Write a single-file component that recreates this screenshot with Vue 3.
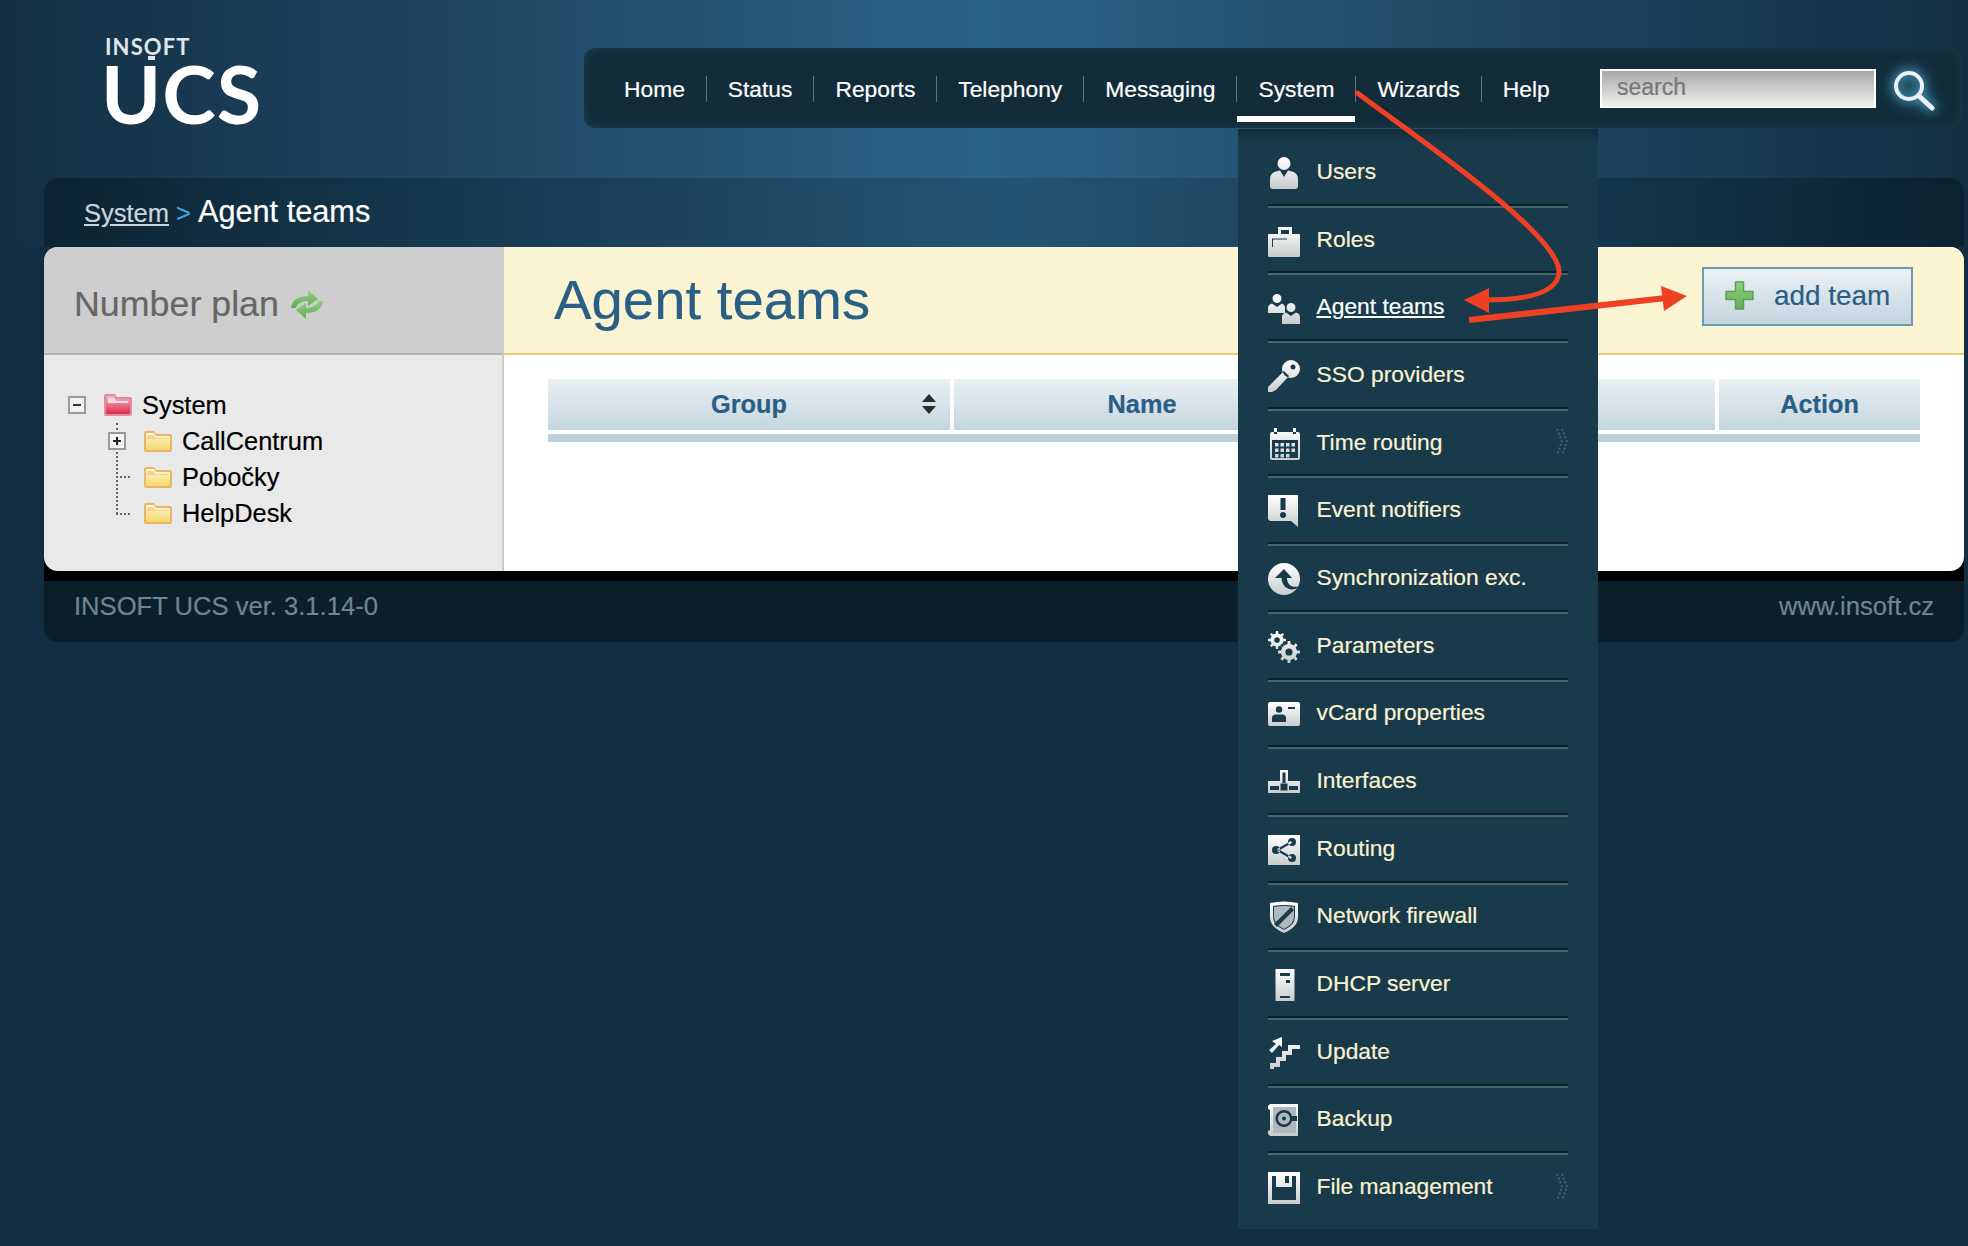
<script setup>
const circ = (x, y, r) => `M${x - r} ${y}a${r} ${r} 0 1 0 ${2 * r} 0a${r} ${r} 0 1 0 ${-2 * r} 0Z`
const rect = (x, y, w, h) => `M${x} ${y}h${w}v${h}h${-w}Z`
const gear = (cx, cy, R, r, hole, n) => {
  let d = ''
  const step = (Math.PI * 2) / n
  for (let i = 0; i < n; i++) {
    const a = i * step
    const pts = [[r, a - step * 0.5], [r, a - step * 0.24], [R, a - step * 0.16], [R, a + step * 0.16], [r, a + step * 0.24]]
    for (const [rad, t] of pts) {
      d += `${d ? 'L' : 'M'}${(cx + rad * Math.cos(t)).toFixed(2)} ${(cy + rad * Math.sin(t)).toFixed(2)}`
    }
  }
  return d + 'Z' + circ(cx, cy, hole)
}

const navItems = ['Home', 'Status', 'Reports', 'Telephony', 'Messaging', 'System', 'Wizards', 'Help']

let calendarDots = ''
for (const y of [15, 20.5, 26]) {
  for (const x of [7, 12.5, 18, 23.5]) {
    if (!(y === 26 && x === 23.5)) calendarDots += rect(x, y, 3.5, 3.5)
  }
}

const menu = [
  { label: 'Users', main: circ(16, 6.5, 6.5) + 'M8 14.5L12 13.5L16 20L20 13.5L24 14.5C28 15.5 30 18 30 22V29Q30 32 27 32H5Q2 32 2 29V22C2 18 4 15.5 8 14.5Z' },
  { label: 'Roles', main: 'M1 9H10V2H24V9H31Q32 9 32 10V31Q32 32 31 32H1Q0 32 0 31V10Q0 9 1 9ZM13 5V9H21V5Z', dark: 'M4 13.5H19V14.5H5V22H4Z' },
  { label: 'Agent teams', active: true, main: circ(9, 6.5, 4.5) + 'M4 11.5L9 15L14 11.5Q17 12.5 17 16V21H0V16Q0 12.5 4 11.5Z' + circ(23, 15.5, 4.5) + 'M18 20.5L23 24L28 20.5Q32 21.5 32 25V32H14V25Q14 21.5 18 20.5Z' },
  { label: 'SSO providers', main: circ(23, 9, 9) + circ(25, 7, 2.5) + 'M16 11L21 16L8 30L4 32H0V27Z' },
  { label: 'Time routing', arrow: true, main: 'M4 4H30Q32 4 32 6V30Q32 32 30 32H4Q2 32 2 30V6Q2 4 4 4ZM4 12V30H30V12Z' + rect(6, 0, 3, 6) + rect(25, 0, 3, 6) + calendarDots },
  { label: 'Event notifiers', main: 'M0 0H30V32L23 26H2L0 24Z', dark: rect(12.5, 3, 5, 12) + circ(15, 20, 3) },
  { label: 'Synchronization exc.', main: circ(16, 16, 16), dark: 'M7 15L16 6L24 15H19C19 21 23 25 31 23.5C26 29 14 27 13.500 15Z' },
  { label: 'Parameters', main: gear(9, 9, 9, 6.5, 2.8, 8) + gear(21, 21, 11, 8, 3.6, 8) },
  { label: 'vCard properties', main: 'M2 4H30Q32 4 32 6V26Q32 28 30 28H2Q0 28 0 26V6Q0 4 2 4Z', dark: circ(11, 11.5, 3.2) + 'M4 24V20Q4 16.5 8 16.5H14Q18 16.5 18 20V24Z' + rect(20, 9, 7, 2) },
  { label: 'Interfaces', main: 'M12 4H20V15H32V27H0V15H12ZM14.500 6.500V18H17.500V6.500ZM2 20V24H11V20ZM21 20V24H30V20Z' + rect(12.5, 17.5, 7, 7) },
  { label: 'Routing', main: rect(0, 1, 32, 30), dark: circ(8, 16, 4) + circ(24, 8, 4) + circ(24, 24, 4) + 'M9 15L23 7L24 9L10 17ZM10 15L24 23L23 25L9 17Z' },
  { label: 'Network firewall', main: 'M2 2Q16 -1 30 2V16Q30 26 16 32Q2 26 2 16ZM5 5V16Q5 24 16 29Q27 24 27 16V5Q16 3 5 5Z', dim: 'M6 6Q16 4 26 6V16Q26 23 16 28Q6 23 6 16Z', dark: 'M23 6L26 9L9 26L6 23Z' },
  { label: 'DHCP server', main: rect(7.5, 0, 19, 32), dark: rect(12, 4, 10, 3) + rect(18, 11, 4, 3) + rect(12, 27, 10, 2) },
  { label: 'Update', main: 'M2 32V26H8V20H14V14H20V8H32V12H24V18H18V24H12V30H6V32Z' + 'M1 13L8 7L4 4L14 0L14 10L11 8L4 16Z' },
  { label: 'Backup', main: 'M2 0H30V32H2L0 30V27L2 26V6L0 5V2Z', dim: rect(5, 3, 23, 26), dark: 'M16 6a8.500 8.500 0 1 0 8 11h5v-5h-5a8.500 8.500 0 0 0 -8 -6ZM16 8.500a6 6 0 1 1 0 12a6 6 0 0 1 0 -12Z' + circ(16, 14.5, 2) },
  { label: 'File management', arrow: true, main: rect(0, 0, 32, 32), dark: 'M4 4H8V15H24V4H28V28H4Z' + rect(17, 4, 4, 7) }
]
</script>

<template>
  <div class="page">
    <svg class="defs" width="0" height="0" aria-hidden="true">
      <defs>
        <linearGradient id="ic" x1="0" y1="0" x2="0" y2="1">
          <stop offset="0" stop-color="#ffffff" />
          <stop offset="1" stop-color="#c8cccd" />
        </linearGradient>
        <linearGradient id="redf" x1="0" y1="0" x2="0" y2="1">
          <stop offset="0" stop-color="#f4b4c0" />
          <stop offset="1" stop-color="#dd2c4c" />
        </linearGradient>
        <linearGradient id="yelf" x1="0" y1="0" x2="0" y2="1">
          <stop offset="0" stop-color="#fef8d8" />
          <stop offset="1" stop-color="#f4d768" />
        </linearGradient>
        <linearGradient id="grn" x1="0" y1="0" x2="0" y2="1">
          <stop offset="0" stop-color="#8fd27f" />
          <stop offset="1" stop-color="#63ab58" />
        </linearGradient>
      </defs>
    </svg>

    <header class="top">
      <div class="logo">
        <span class="logo-small">INSOFT</span>
        <span class="logo-big">UCS</span>
      </div>
      <nav class="nav">
        <a v-for="item in navItems" :key="item" class="nav-item" :class="{ active: item === 'System' }">{{ item }}</a>
        <input class="search" placeholder="search" />
        <svg class="search-icon" width="42" height="42" viewBox="0 0 42 42">
          <circle cx="16" cy="16" r="13" fill="none" stroke="#e9f2f6" stroke-width="4" />
          <path d="M26 26L39 38" stroke="#e9f2f6" stroke-width="5" stroke-linecap="round" />
        </svg>
      </nav>
    </header>

    <div class="crumbs">
      <a class="crumb-link">System</a>
      <span class="crumb-sep">&gt;</span>
      <span class="crumb-current">Agent teams</span>
    </div>

    <main class="panel">
      <aside class="side">
        <div class="side-head">
          <span>Number plan</span>
          <svg class="soft" width="34" height="31" viewBox="0 0 34 31">
            <path d="M1 19C2 11 8 7 18 7V1L28 10L18 17V12C11 12 7 15 6 19Z" fill="url(#grn)" />
            <path d="M33 12C32 20 26 24 16 24V30L6 21L16 14V19C23 19 27 16 28 12Z" fill="url(#grn)" />
          </svg>
        </div>
        <div class="tree">
          <div class="row">
            <span class="box">
              <svg width="18" height="18" viewBox="0 0 18 18"><rect x="1" y="1" width="16" height="16" fill="#f2f2f2" stroke="#999" stroke-width="2" /><rect x="5" y="8" width="8" height="2" fill="#333" /></svg>
            </span>
            <svg class="folder soft" width="28" height="22" viewBox="0 0 28 22">
              <path d="M0 2Q0 0 2 0H11L13 3H26Q28 3 28 5V20Q28 22 26 22H2Q0 22 0 20Z" fill="#e28ba0" />
              <path d="M2 3Q2 2 3 2H10L12 5H25Q26 5 26 6V19Q26 20 25 20H3Q2 20 2 19Z" fill="url(#redf)" />
              <path d="M4 4H10L12 7H24V9H4Z" fill="#fbdde3" />
            </svg>
            <span>System</span>
          </div>
          <div class="sub">
            <div class="row">
              <span class="box">
                <svg width="18" height="18" viewBox="0 0 18 18"><rect x="1" y="1" width="16" height="16" fill="#f2f2f2" stroke="#999" stroke-width="2" /><path d="M5 8H8V5H10V8H13V10H10V13H8V10H5Z" fill="#222" /></svg>
              </span>
              <svg class="folder soft" width="28" height="21" viewBox="0 0 28 21">
                <path d="M0 2Q0 0 2 0H10L12 3H26Q28 3 28 5V19Q28 21 26 21H2Q0 21 0 19Z" fill="#eab46a" />
                <path d="M2 3Q2 2 3 2H10L12 5H25Q26 5 26 6V18Q26 19 25 19H3Q2 19 2 18Z" fill="url(#yelf)" />
                <path d="M3 4H9L11 7H25V8H3Z" fill="#e9bd6f" opacity=".55" />
              </svg>
              <span>CallCentrum</span>
            </div>
            <div class="row">
              <span class="box spur"></span>
              <svg class="folder soft" width="28" height="21" viewBox="0 0 28 21">
                <path d="M0 2Q0 0 2 0H10L12 3H26Q28 3 28 5V19Q28 21 26 21H2Q0 21 0 19Z" fill="#eab46a" />
                <path d="M2 3Q2 2 3 2H10L12 5H25Q26 5 26 6V18Q26 19 25 19H3Q2 19 2 18Z" fill="url(#yelf)" />
                <path d="M3 4H9L11 7H25V8H3Z" fill="#e9bd6f" opacity=".55" />
              </svg>
              <span>Pobočky</span>
            </div>
            <div class="row">
              <span class="box spur"></span>
              <svg class="folder soft" width="28" height="21" viewBox="0 0 28 21">
                <path d="M0 2Q0 0 2 0H10L12 3H26Q28 3 28 5V19Q28 21 26 21H2Q0 21 0 19Z" fill="#eab46a" />
                <path d="M2 3Q2 2 3 2H10L12 5H25Q26 5 26 6V18Q26 19 25 19H3Q2 19 2 18Z" fill="url(#yelf)" />
                <path d="M3 4H9L11 7H25V8H3Z" fill="#e9bd6f" opacity=".55" />
              </svg>
              <span>HelpDesk</span>
            </div>
          </div>
        </div>
      </aside>

      <section class="content">
        <div class="content-head">
          <h1>Agent teams</h1>
          <button class="add-btn">
            <svg class="soft" width="29" height="29" viewBox="0 0 29 29">
              <path d="M10.500 1H18.500V10.500H28V18.500H18.500V28H10.500V18.500H1V10.500H10.500Z" fill="url(#grn)" stroke="#5f9f54" stroke-width="1.500" stroke-linejoin="round" />
            </svg>
            <span>add team</span>
          </button>
        </div>
        <div class="table">
          <div class="th">Group
            <svg class="sort" width="16" height="20" viewBox="0 0 16 20"><path d="M8 0L15 8H1ZM8 20L1 12H15Z" fill="#2b2b2b" /></svg>
          </div>
          <div class="th">Name</div>
          <div class="th"></div>
          <div class="th">Action</div>
        </div>
        <div class="table-bar"></div>
      </section>
    </main>

    <footer class="foot">
      <span>INSOFT UCS ver. 3.1.14-0</span>
      <span>www.insoft.cz</span>
    </footer>

    <ul class="menu">
      <li v-for="item in menu" :key="item.label" class="menu-item" :class="{ current: item.active }">
        <svg class="menu-icon soft" width="32" height="32" viewBox="0 0 32 32">
          <path :d="item.main" fill="url(#ic)" fill-rule="evenodd" />
          <path v-if="item.dim" :d="item.dim" fill="#aeb9be" />
          <path v-if="item.dark" :d="item.dark" fill="#183a4b" fill-rule="evenodd" />
        </svg>
        <span class="menu-label">{{ item.label }}</span>
        <svg v-if="item.arrow" class="chev" width="12" height="28" viewBox="0 0 12 28">
          <path d="M1 1L6 14L1 27M6 1L11 14L6 27" fill="none" stroke="#3f6070" stroke-width="2" stroke-dasharray="2 2" />
        </svg>
      </li>
    </ul>

    <svg class="arrows" width="1968" height="1246" viewBox="0 0 1968 1246">
      <path d="M1356 92C1420 140 1560 235 1559 272C1558 295 1520 300 1485 300" fill="none" stroke="#ee4023" stroke-width="5" />
      <path d="M1464 300L1489 288V313Z" fill="#ee4023" />
      <path d="M1469 320L1666 298" fill="none" stroke="#ee4023" stroke-width="6" />
      <path d="M1687 296L1661 286L1664 311Z" fill="#ee4023" />
    </svg>
  </div>
</template>

<style scoped>
.page {
  position: relative;
  width: 1968px;
  height: 1246px;
  overflow: hidden;
  font-family: "Liberation Sans", Arial, sans-serif;
  -webkit-text-stroke: 0.2px;
  background: linear-gradient(90deg, #132e42 0%, #2b6288 50%, #132e42 100%) top / 100% 247px no-repeat, #132e42;
}
.defs {
  position: absolute;
}
.soft {
  filter: blur(0.45px);
}
.top {
  display: flex;
  height: 178px;
  box-sizing: border-box;
  padding-top: 48px;
}
.logo {
  display: flex;
  flex-direction: column;
  width: 479px;
  margin: -14px 0 0 105px;
  color: #fff;
  font-family: Lato, sans-serif;
}
.logo-small {
  position: relative;
  font-size: 22px;
  line-height: 26px;
  letter-spacing: 1.1px;
  font-weight: 700;
  color: #dfe6ea;
  -webkit-text-stroke: 0;
}
.logo-small::after {
  content: "";
  position: absolute;
  left: 43px;
  top: 22px;
  width: 7px;
  height: 4px;
  background: #dfe6ea;
}
.logo-big {
  margin: -2px 0 0 -4px;
  font-size: 81px;
  line-height: 70px;
  font-weight: 700;
  letter-spacing: 1px;
  -webkit-text-stroke: 0;
}
.nav {
  display: flex;
  align-items: center;
  width: 1378px;
  height: 80px;
  box-sizing: border-box;
  padding: 0 27px 0 19px;
  border-radius: 12px;
  background: #122c3a;
  box-shadow: inset 0 0 8px #1c3f50;
}
.nav-item {
  position: relative;
  display: block;
  height: 26px;
  line-height: 26px;
  padding: 0 21px;
  font-size: 22.8px;
  color: #fff;
  border-left: 1px solid #5d7680;
  margin-top: 2px;
}
.nav-item:first-child {
  border-left: 0;
}
.nav-item.active::after {
  content: "";
  position: absolute;
  left: 0;
  right: 0;
  top: 40px;
  height: 6px;
  background: #fff;
}
.search {
  width: 276px;
  height: 39px;
  box-sizing: border-box;
  margin-left: auto;
  padding: 0 15px 2px;
  border: 2px solid #fff;
  border-bottom-width: 1px;
  outline: 0;
  border-radius: 0;
  background: linear-gradient(#a8a8a8, #f3f3f3);
  font-family: "Liberation Sans", Arial, sans-serif;
  font-size: 23px;
}
.search::placeholder {
  color: #777;
  opacity: 1;
}
.search-icon {
  margin: 6px 0 0 17px;
  filter: drop-shadow(0 0 5px #4f9fc0) drop-shadow(0 0 7px #3f8cad);
}
.crumbs {
  display: flex;
  align-items: baseline;
  height: 69px;
  box-sizing: border-box;
  margin: 0 4px 0 44px;
  padding: 16px 0 0 40px;
  border-radius: 14px 14px 0 0;
  background: linear-gradient(90deg, #0c2433 0%, #245475 50%, #0b2230 100%);
}
.crumb-link {
  font-size: 25.5px;
  color: #c8d5dc;
  text-decoration: underline;
}
.crumb-sep {
  margin: 0 7px;
  font-size: 25.5px;
  color: #45a5dc;
}
.crumb-current {
  font-size: 30.7px;
  color: #fff;
}
.panel {
  position: relative;
  z-index: 1;
  display: grid;
  grid-template-columns: 460px 1fr;
  height: 324px;
  margin: 0 4px 0 44px;
  border-radius: 14px;
}
.side {
  background: #e9e9e9;
  border-right: 2px solid #cccccc;
  border-radius: 14px 0 0 14px;
}
.side-head {
  display: flex;
  align-items: center;
  gap: 11px;
  height: 108px;
  box-sizing: border-box;
  padding: 8px 0 0 30px;
  font-size: 35.8px;
  color: #666;
  background: #cecece;
  border-bottom: 2px solid #b3b3b3;
  border-radius: 14px 0 0 0;
}
.tree {
  padding-top: 32px;
  font-size: 25.4px;
  color: #000;
}
.row {
  display: flex;
  align-items: center;
  height: 36.2px;
  padding-left: 24px;
}
.box {
  position: relative;
  z-index: 1;
  display: block;
  width: 18px;
  height: 18px;
  margin-right: 18px;
  flex: none;
}
.box svg {
  display: block;
}
.spur::before {
  content: "";
  position: absolute;
  left: 8px;
  top: 8px;
  width: 14px;
  border-top: 2px dotted #666;
}
.folder {
  flex: none;
  margin-right: 10px;
}
.sub {
  position: relative;
  padding-left: 40px;
}
.sub::before {
  content: "";
  position: absolute;
  left: 72px;
  top: 0;
  bottom: 18px;
  border-left: 2px dotted #666;
}
.content {
  background: #fff;
  border-radius: 0 14px 14px 0;
}
.content-head {
  display: flex;
  align-items: center;
  justify-content: space-between;
  height: 108px;
  box-sizing: border-box;
  padding: 0 51px 0 50px;
  background: #fbf4d2;
  border-bottom: 2px solid #e8cc77;
  border-radius: 0 14px 0 0;
}
h1 {
  margin: 0 0 1px;
  font-size: 56.3px;
  font-weight: 400;
  color: #2a5f85;
}
.add-btn {
  display: flex;
  align-items: center;
  gap: 20px;
  width: 211px;
  height: 59px;
  box-sizing: border-box;
  margin-bottom: 7px;
  padding: 0 0 2px 21px;
  border: 2px solid #6a9ab5;
  border-radius: 0;
  background: linear-gradient(#ebf1f4, #c3d5e0);
  font-family: "Liberation Sans", Arial, sans-serif;
  font-size: 27.9px;
  color: #2a5f85;
}
.table {
  display: grid;
  grid-template-columns: 402px 376px 381px 201px;
  gap: 4px;
  margin: 24px 44px 0 44px;
}
.th {
  position: relative;
  height: 51px;
  line-height: 51px;
  text-align: center;
  font-size: 25.3px;
  font-weight: 700;
  color: #2a5f85;
  background: linear-gradient(#e9eff2, #c4d6e0);
}
.sort {
  position: absolute;
  right: 13px;
  top: 15px;
}
.table-bar {
  width: 1372px;
  height: 8px;
  margin: 4px 0 0 44px;
  background: #bcd0dc;
}
.foot {
  display: flex;
  align-items: center;
  justify-content: space-between;
  height: 85px;
  box-sizing: border-box;
  margin: -14px 4px 0 44px;
  padding: 0 30px 10px 30px;
  border-top: 24px solid #000;
  border-radius: 0 0 14px 14px;
  background: #0a1f2a;
  font-size: 25.6px;
  color: #6f858f;
}
.menu {
  position: absolute;
  z-index: 2;
  left: 1238px;
  top: 129px;
  width: 360px;
  height: 1100px;
  box-sizing: border-box;
  margin: 0;
  padding: 11px 30px 6px;
  list-style: none;
  background: linear-gradient(#122c3a 0, #183a4b 14px);
}
.menu-item {
  display: flex;
  align-items: center;
  height: 67.7px;
  box-sizing: border-box;
  padding-bottom: 3px;
  border-bottom: 2px solid #44666f;
  box-shadow: inset 0 -2px 0 #0b202c;
  font-size: 22.8px;
  color: #faf3d2;
}
.menu-item:last-child {
  border-bottom-color: transparent;
  box-shadow: none;
}
.menu-icon {
  flex: none;
  margin: 3px 16.500px 0 0;
}
.current .menu-label {
  color: #fff;
  text-decoration: underline;
}
.chev {
  margin-left: auto;
}
.arrows {
  position: absolute;
  z-index: 3;
  left: 0;
  top: 0;
  pointer-events: none;
}
</style>
